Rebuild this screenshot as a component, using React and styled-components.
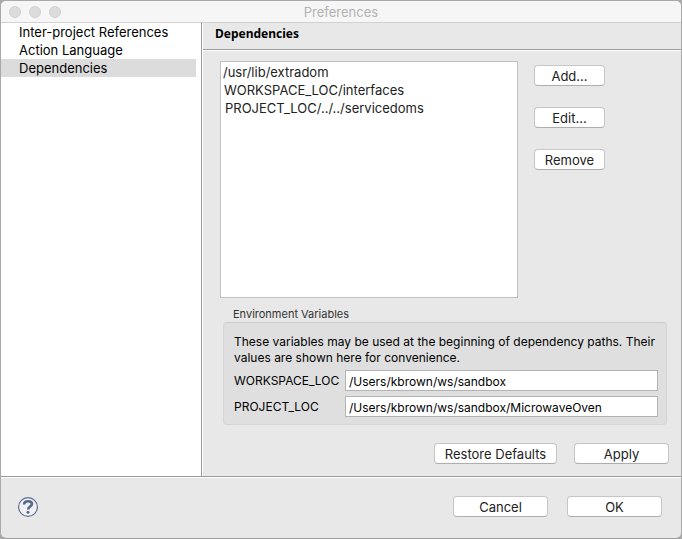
import React from "react";
import styled, { createGlobalStyle } from "styled-components";

const GlobalStyle = createGlobalStyle`
  * { box-sizing: border-box; }
  html { background: #a9a9a9; }
  body {
    margin: 0;
    font-family: Inter, "Liberation Sans", sans-serif;
    font-size: 13px;
    line-height: 18px;
    color: #000;
  }
`;

const Window = styled.div`
  display: flex;
  flex-direction: column;
  min-height: 100vh;
  border: 1px solid #a9a9a9;
  border-bottom-color: #9c9c9c;
  border-radius: 6px;
  background: #e8e8e8;
  overflow: hidden;
`;

const TitleBar = styled.header`
  display: grid;
  grid-template-columns: 1fr auto 1fr;
  align-items: center;
  height: 22px;
  padding: 0 8px;
  background: #f6f6f6;
  border-bottom: 1px solid #d1d1d1;
`;

const Lights = styled.div`
  display: flex;
  gap: 8px;
`;

const Light = styled.button`
  width: 12px;
  height: 12px;
  padding: 0;
  border: 1px solid #d0d0d0;
  border-radius: 50%;
  background: #dcdcdc;
`;

const Title = styled.h1`
  margin: 0;
  font-size: 13px;
  font-weight: 400;
  color: #b2b2b2;
`;

const Body = styled.div`
  display: flex;
  flex: 1;
`;

const Sidebar = styled.nav`
  flex: 0 0 201px;
  background: #fff;
  border-right: 1px solid #9b9b9b;
`;

const NavItem = styled.a`
  display: block;
  height: 18px;
  margin-right: 5px;
  padding-left: 18px;
  color: inherit;
  text-decoration: none;
  white-space: nowrap;
  background: ${(p) => (p.$selected ? "#dcdcdc" : "transparent")};
`;

const Page = styled.main`
  display: flex;
  flex-direction: column;
  flex: 1;
  min-width: 0;
  border-left: 1px solid #fff;
`;

const PageHeading = styled.h2`
  height: 28px;
  margin: 0;
  padding: 1px 12px 0;
  font: bold 12px/20px "Noto Sans", sans-serif;
  border-bottom: 1px solid #fff;
  box-shadow: inset 0 -1px #9b9b9b;
`;

const Content = styled.div`
  display: flex;
  flex-direction: column;
  flex: 1;
  padding: 10px 12px 12px 17px;
`;

const PathArea = styled.div`
  display: flex;
  flex: 1;
  gap: 16px;
`;

const PathList = styled.ul`
  flex: 1;
  margin: 0;
  padding: 1px 2px;
  list-style: none;
  background: #fff;
  border: 1px solid #c1c1c1;
  color: #222;
`;

const Path = styled.li`
  height: 18px;
  padding-left: ${(p) => p.$indent}px;
`;

const PathActions = styled.div`
  display: flex;
  flex-direction: column;
  flex: 0 0 135px;
  align-items: flex-start;
  gap: 21px;
  padding-top: 4px;
`;

const Button = styled.button`
  width: ${(p) => p.$width}px;
  height: 21px;
  padding: 0;
  font: inherit;
  line-height: 18px;
  color: #222;
  background: #fff;
  border: 1px solid #c6c6c6;
  border-bottom-color: #adadad;
  border-radius: 4px;
`;

const Group = styled.section`
  margin: 9px 2px 0 3px;
`;

const GroupTitle = styled.h3`
  margin: 0 0 0 10px;
  font-size: 11px;
  line-height: 15px;
  font-weight: 400;
  color: #333;
`;

const GroupBox = styled.div`
  display: flex;
  flex-direction: column;
  gap: 5px;
  padding: 11px 8px 7px 10px;
  font-size: 12px;
  background: #dfdfdf;
  border: 1px solid #d6d6d6;
  border-top-color: #cecece;
  border-radius: 4px;
`;

const Note = styled.p`
  margin: 0 -8px -1px 0;
  line-height: 16px;
`;

const Field = styled.label`
  display: grid;
  grid-template-columns: 111px 1fr;
  align-items: center;
`;

const Input = styled.input`
  width: 100%;
  height: 21px;
  padding: 1px 3px 0;
  font: inherit;
  color: #000;
  background: #fff;
  border: 1px solid #b3b3b3;
  border-radius: 0;
`;

const PageActions = styled.div`
  display: flex;
  justify-content: flex-end;
  gap: 17px;
  margin-top: 18px;
`;

const Footer = styled.footer`
  display: flex;
  align-items: center;
  height: 62px;
  padding: 0 19px 2px 16px;
  border-top: 1px solid #9b9b9b;
  box-shadow: inset 0 1px #fff;
`;

const HelpButton = styled.button`
  display: flex;
  padding: 0;
  border: 0;
  background: none;
`;

const FooterActions = styled.div`
  display: flex;
  gap: 19px;
  margin-left: auto;
`;

const navItems = ["Inter-project References", "Action Language", "Dependencies"];

const paths = [
  { text: "/usr/lib/extradom", indent: 0 },
  { text: "WORKSPACE_LOC/interfaces", indent: 1 },
  { text: "PROJECT_LOC/../../servicedoms", indent: 2 },
];

const variables = [
  { name: "WORKSPACE_LOC", value: "/Users/kbrown/ws/sandbox" },
  { name: "PROJECT_LOC", value: "/Users/kbrown/ws/sandbox/MicrowaveOven" },
];

function HelpIcon() {
  return (
    <svg width="22" height="22" viewBox="0 0 22 22" fill="none" aria-hidden="true">
      <circle cx="11" cy="11" r="9.4" fill="#f0f0f2" stroke="#5c6d92" strokeWidth="1.2" />
      <path
        d="M7.1 8.4C7.1 5.9 8.9 5.2 11.1 5.2C13.4 5.2 15 6.2 15 8C15 10.5 11.2 10.3 11.2 13.4"
        stroke="#56678e"
        strokeWidth="2.6"
      />
      <circle cx="11" cy="16.3" r="1.5" fill="#56678e" />
    </svg>
  );
}

export default function App() {
  return (
    <>
      <GlobalStyle />
      <Window>
        <TitleBar>
          <Lights>
            <Light aria-label="Close" />
            <Light aria-label="Minimize" />
            <Light aria-label="Zoom" />
          </Lights>
          <Title>Preferences</Title>
        </TitleBar>
        <Body>
          <Sidebar>
            {navItems.map((item) => (
              <NavItem key={item} href="#" $selected={item === "Dependencies"}>
                {item}
              </NavItem>
            ))}
          </Sidebar>
          <Page>
            <PageHeading>Dependencies</PageHeading>
            <Content>
              <PathArea>
                <PathList>
                  {paths.map((path) => (
                    <Path key={path.text} $indent={path.indent}>
                      {path.text}
                    </Path>
                  ))}
                </PathList>
                <PathActions>
                  <Button $width={71}>Add...</Button>
                  <Button $width={71}>Edit...</Button>
                  <Button $width={71}>Remove</Button>
                </PathActions>
              </PathArea>
              <Group>
                <GroupTitle>Environment Variables</GroupTitle>
                <GroupBox>
                  <Note>
                    These variables may be used at the beginning of dependency paths. Their
                    values are shown here for convenience.
                  </Note>
                  {variables.map((variable) => (
                    <Field key={variable.name}>
                      {variable.name}
                      <Input readOnly value={variable.value} />
                    </Field>
                  ))}
                </GroupBox>
              </Group>
              <PageActions>
                <Button $width={123}>Restore Defaults</Button>
                <Button $width={95}>Apply</Button>
              </PageActions>
            </Content>
          </Page>
        </Body>
        <Footer>
          <HelpButton aria-label="Help">
            <HelpIcon />
          </HelpButton>
          <FooterActions>
            <Button $width={95}>Cancel</Button>
            <Button $width={95}>OK</Button>
          </FooterActions>
        </Footer>
      </Window>
    </>
  );
}
